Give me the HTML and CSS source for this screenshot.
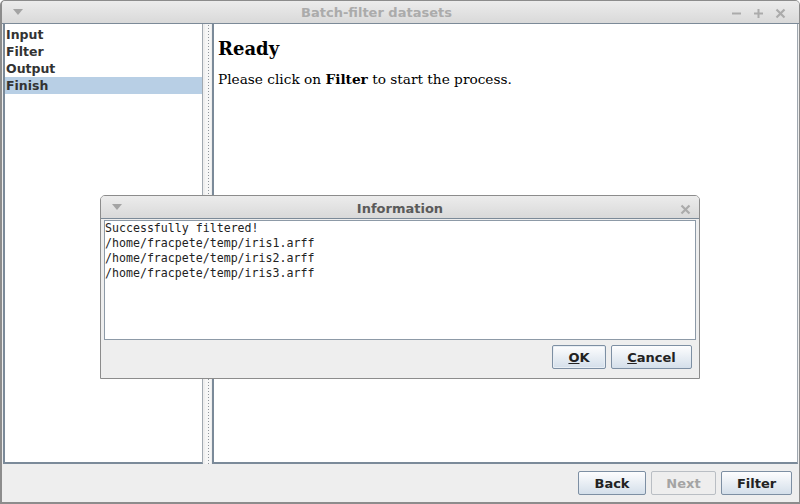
FILE: index.html
```html
<!DOCTYPE html>
<html>
<head>
<meta charset="utf-8">
<link rel="stylesheet" href="styles.css">
</head>
<body>
<div class="window">
  <div class="titlebar">
    <span class="menu-arrow"></span>
    <span class="title main">Batch-filter datasets</span>
    <span class="controls">
      <svg class="ctl" width="11" height="11" viewBox="0 0 11 11"><path d="M1 5.5h9" stroke="#ababab" stroke-width="2"/></svg>
      <svg class="ctl" width="11" height="11" viewBox="0 0 11 11"><path d="M1 5.5h9M5.5 1v9" stroke="#ababab" stroke-width="2"/></svg>
      <svg class="ctl" width="11" height="11" viewBox="0 0 11 11"><path d="M1.5 1.5l8 8M9.5 1.5l-8 8" stroke="#ababab" stroke-width="2.2"/></svg>
    </span>
  </div>
  <div class="content">
    <div class="panes">
      <ul class="steps">
        <li>Input</li>
        <li>Filter</li>
        <li>Output</li>
        <li class="sel">Finish</li>
      </ul>
      <div class="splitter"><div class="grip"></div></div>
      <div class="page">
        <h1>Ready</h1>
        <p>Please click on <b>Filter</b> to start the process.</p>
      </div>
    </div>
    <div class="buttons">
      <button class="btn back">Back</button>
      <button class="btn next disabled">Next</button>
      <button class="btn filter">Filter</button>
    </div>
  </div>

  <div class="dialog">
    <div class="titlebar dtitle">
      <span class="menu-arrow"></span>
      <span class="title dark">Information</span>
      <span class="controls dctl">
        <svg class="ctl" width="11" height="11" viewBox="0 0 11 11"><path d="M1.5 1.5l8 8M9.5 1.5l-8 8" stroke="#ababab" stroke-width="2.2"/></svg>
      </span>
    </div>
    <div class="dbody">
      <pre class="msg">Successfully filtered!
/home/fracpete/temp/iris1.arff
/home/fracpete/temp/iris2.arff
/home/fracpete/temp/iris3.arff</pre>
      <div class="dbuttons">
        <button class="btn ok"><u>O</u>K</button>
        <button class="btn cancel"><u>C</u>ancel</button>
      </div>
    </div>
  </div>
</div>
</body>
</html>
```
FILE: styles.css
```css
* { box-sizing: border-box; }
html, body { margin: 0; padding: 0; background: #ffffff; }
body { width: 800px; height: 504px; overflow: hidden; font-family: "DejaVu Sans", sans-serif; }

.window {
  position: relative;
  width: 800px;
  height: 504px;
  border: 1px solid #8c8c8c;
  border-left-width: 2px;
  border-bottom-width: 2px;
  border-radius: 5px 5px 0 0;
  background: #eeeeee;
  display: flex;
  flex-direction: column;
  overflow: hidden;
}

.titlebar {
  height: 23px;
  flex: none;
  display: flex;
  align-items: center;
  position: relative;
  background: linear-gradient(#ececec, #d9d9d9);
  border-bottom: 1px solid #7c8a98;
}
.menu-arrow {
  position: absolute;
  left: 11px;
  top: 8px;
  width: 0; height: 0;
  border-left: 5px solid transparent;
  border-right: 5px solid transparent;
  border-top: 6px solid #a4a4a4;
}
.title {
  flex: 1;
  text-align: center;
  font-weight: bold;
  font-size: 13px;
  color: #ababab;
  padding-top: 3px;
}
.title.main { padding-left: 24px; padding-right: 72px; padding-top: 1px; }
.title.dark { color: #5a5a5a; }
.controls {
  position: absolute;
  right: 13px;
  top: 7px;
  display: flex;
  gap: 11px;
}
.ctl { display: block; }
.dctl { right: 8px; top: 8px; }

.content {
  flex: 1;
  display: flex;
  flex-direction: column;
  padding: 0 1px 0 1px;
}
.panes {
  flex: 1;
  display: flex;
  min-height: 0;
}
.steps {
  list-style: none;
  margin: 0;
  padding: 0;
  width: 200px;
  flex: none;
  background: #fff;
  border-left: 2px solid #7b8a99;
  border-bottom: 2px solid #7b8a99;
  border-right: 1px solid #a0a8b0;
  font-weight: bold;
  font-size: 12.5px;
  color: #333;
}
.steps li {
  height: 17px;
  line-height: 17px;
  padding-left: 1px;
}
.steps li:first-child { margin-top: 2px; }
.steps li.sel { background: #b8cfe5; }

.splitter {
  width: 9px;
  flex: none;
  padding: 0 1px 0 2px;
}
.grip {
  height: 100%;
  background-color: #f6f6f6;
  background-image: repeating-linear-gradient(#8e949a 0 1px, transparent 1px 3px);
  background-size: 1px 100%;
  background-position: 3px 1px;
  background-repeat: no-repeat;
}
.page {
  flex: 1;
  background: #fff;
  border-left: 2px solid #7b8a99;
  border-bottom: 2px solid #7b8a99;
  border-right: 1px solid #a0a8b0;
  padding: 14px 4px;
  font-family: "DejaVu Serif", serif;
}
.page h1 {
  margin: 0;
  font-size: 18px;
  line-height: 22px;
  font-weight: bold;
  color: #000;
}
.page p {
  margin: 10px 0 0 0;
  font-size: 13.7px;
  line-height: 18px;
  color: #000;
}

.buttons {
  height: 38px;
  flex: none;
  display: flex;
  justify-content: flex-end;
  align-items: flex-start;
  padding-top: 7px;
  padding-right: 6px;
  gap: 5px;
}
.btn {
  height: 24px;
  border: 1px solid #7d8fa3;
  border-radius: 2px;
  background: linear-gradient(#fdfdfe, #d4dfea);
  font-family: "DejaVu Sans", sans-serif;
  font-weight: bold;
  font-size: 13px;
  color: #222;
  padding: 0;
  cursor: default;
}
.back { width: 68px; }
.next { width: 65px; }
.filter { width: 71px; }
.btn.disabled {
  background: #eeeeee;
  border-color: #b9bec4;
  color: #a4a4a4;
}

.dialog {
  position: absolute;
  left: 98px;
  top: 194px;
  width: 600px;
  height: 184px;
  border: 1px solid #8c8c8c;
  border-radius: 5px 5px 0 0;
  background: #eeeeee;
  display: flex;
  flex-direction: column;
  overflow: hidden;
}
.dbody {
  flex: 1;
  display: flex;
  flex-direction: column;
  padding: 1px 3px 0 3px;
}
.msg {
  margin: 0;
  height: 120px;
  background: #fff;
  border: 1px solid #8d9aa7;
  font-family: "DejaVu Sans Mono", monospace;
  font-size: 11.6px;
  line-height: 15px;
  padding: 0;
  color: #222;
}
.dbuttons {
  display: flex;
  justify-content: flex-end;
  gap: 5px;
  padding-top: 5px;
  padding-right: 4px;
}
.ok { width: 54px; box-shadow: inset 0 0 0 1px #e8eef4; }
.cancel { width: 81px; }
```
